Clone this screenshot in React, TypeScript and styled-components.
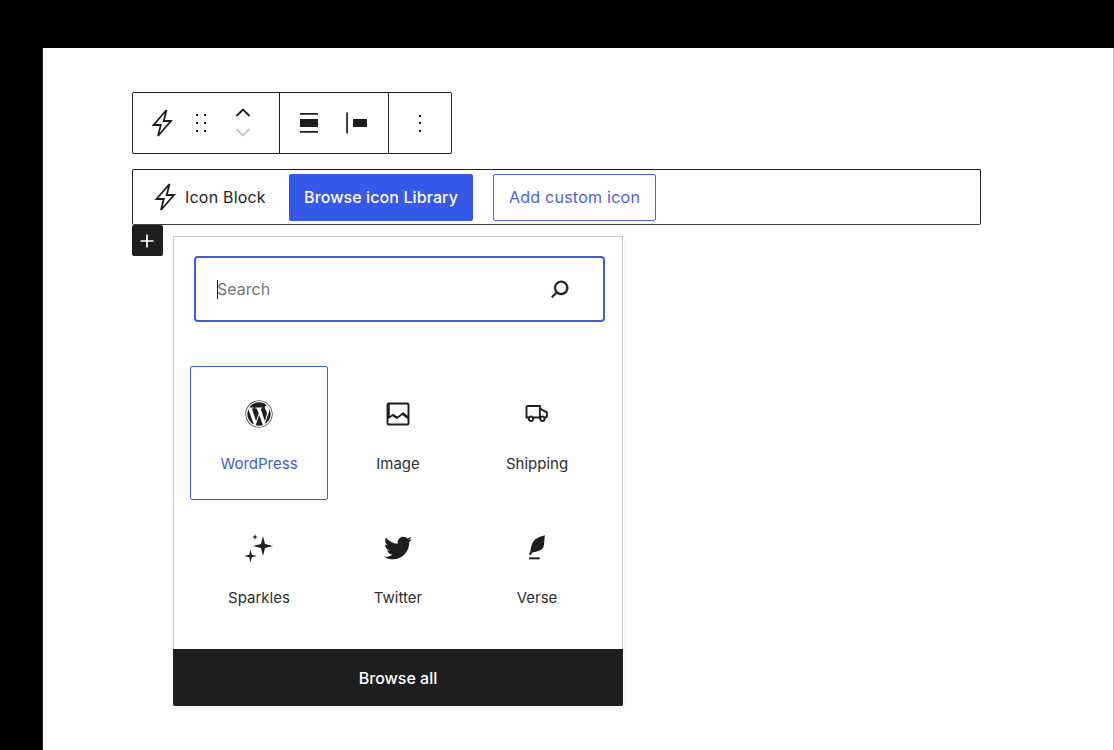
import { createGlobalStyle } from "styled-components";
import styled from "styled-components";
import { FaWordpress, FaTwitter } from "react-icons/fa";

const GlobalStyle = createGlobalStyle`
  html, body {
    margin: 0;
    padding: 0;
    background: #000;
    font-family: Inter, "Liberation Sans", sans-serif;
    color: #1e1e1e;
  }
`;

const Page = styled.div`
  width: 1114px;
  height: 750px;
  padding: 48px 0 0 43px;
  box-sizing: border-box;
  background: #000;
  overflow: hidden;
`;

const Canvas = styled.div`
  height: 702px;
  padding: 44px 0 0 89px;
  box-sizing: border-box;
  background: #fff;
  border-left: 1px solid #2c2c2c;
  border-right: 1px solid #bdbdbd;
  margin-left: -1px;
`;

const BlockToolbar = styled.div`
  display: flex;
  width: 320px;
  height: 62px;
  box-sizing: border-box;
  border: 1px solid #1e1e1e;
  border-radius: 2px;
`;

const ToolbarGroup = styled.div<{ $width: number }>`
  display: flex;
  align-items: center;
  width: ${(p) => p.$width}px;
  flex-shrink: 0;
  box-sizing: border-box;
  & + & {
    border-left: 1px solid #1e1e1e;
  }
`;

const ToolIcon = styled.svg<{ $left: number }>`
  width: 24px;
  height: 24px;
  margin-left: ${(p) => p.$left}px;
  flex-shrink: 0;
  fill: #1e1e1e;
`;

const Mover = styled.div`
  display: flex;
  flex-direction: column;
  align-items: center;
  gap: 11px;
  margin-left: 21px;
  margin-top: -1px;
`;

const MoverIcon = styled.svg<{ $muted?: boolean }>`
  width: 18px;
  height: 9px;
  fill: none;
  stroke: ${(p) => (p.$muted ? "#c4c4c4" : "#1e1e1e")};
  stroke-width: 1.9;
`;

const PlaceholderBar = styled.div`
  display: flex;
  align-items: center;
  width: 849px;
  height: 56px;
  margin-top: 15px;
  box-sizing: border-box;
  border: 1px solid #1e1e1e;
  border-bottom-color: #444;
  border-radius: 2px;
`;

const BoltIcon = styled.svg<{ $left: number }>`
  width: 24px;
  height: 30px;
  margin-left: ${(p) => p.$left}px;
  flex-shrink: 0;
  fill: none;
  stroke: #1e1e1e;
  stroke-width: 1.8;
  stroke-linejoin: miter;
`;

const BlockTitle = styled.span`
  margin-left: 8px;
  font-size: 16px;
  line-height: 20px;
  letter-spacing: 0.2px;
  width: 104px;
  flex-shrink: 0;
`;

const Button = styled.div<{ $primary?: boolean }>`
  display: flex;
  align-items: center;
  justify-content: center;
  height: 47px;
  box-sizing: border-box;
  border-radius: 2px;
  font-size: 16px;
  font-weight: 500;
  letter-spacing: 0.1px;
  ${(p) =>
    p.$primary
      ? "width: 184px; background: #3858e9; color: #fff; margin-right: 20px;"
      : "width: 163px; background: #fff; color: #4a63df; border: 1.5px solid #4a63df; font-weight: 400; letter-spacing: 0.25px;"}
`;

const InserterRow = styled.div`
  display: flex;
  align-items: flex-start;
  gap: 10px;
`;

const AddButton = styled.div`
  display: flex;
  align-items: center;
  justify-content: center;
  width: 31px;
  height: 31px;
  border-radius: 2px;
  background: #1e1e1e;
  flex-shrink: 0;
  svg {
    width: 26px;
    height: 26px;
    margin-left: -1px;
    fill: #fff;
  }
`;

const Popover = styled.div`
  width: 450px;
  height: 470px;
  margin-top: 11px;
  box-sizing: border-box;
  display: flex;
  flex-direction: column;
  border: 1px solid #ccc;
  border-bottom: none;
  box-shadow: 0 2px 6px rgba(0, 0, 0, 0.05);
  background: #fff;
`;

const SearchField = styled.div`
  display: flex;
  align-items: center;
  height: 66px;
  margin: 19px 17px 0 20px;
  padding-left: 21px;
  padding-right: 29px;
  box-sizing: border-box;
  border: 2px solid #3e5de0;
  border-radius: 4px;
  svg {
    width: 28px;
    height: 28px;
    fill: #1e1e1e;
    stroke: #1e1e1e;
    stroke-width: 0.4;
    flex-shrink: 0;
  }
`;

const Caret = styled.span`
  width: 1px;
  height: 19px;
  margin-right: -1px;
  background: #1e1e1e;
  flex-shrink: 0;
`;

const Placeholder = styled.span`
  flex: 1;
  font-size: 16px;
  color: #757575;
`;

const IconGrid = styled.div`
  display: grid;
  grid-template-columns: repeat(3, 139px);
  grid-auto-rows: 134px;
  margin: 44px 0 0 16px;
`;

const IconCell = styled.div<{ $active?: boolean }>`
  display: flex;
  flex-direction: column;
  align-items: center;
  width: 138px;
  padding-top: 33px;
  box-sizing: border-box;
  border: 1px solid ${(p) => (p.$active ? "#3e5de0" : "transparent")};
  border-radius: 2px;
  color: ${(p) => (p.$active ? "#3f5ce0" : "#2f2f2f")};
  svg {
    width: 28px;
    height: 28px;
    fill: #1e1e1e;
    overflow: visible;
  }
`;

const CellLabel = styled.span`
  margin-top: 26px;
  font-size: 15px;
  line-height: 20px;
`;

const BrowseAll = styled.div`
  display: flex;
  align-items: center;
  justify-content: center;
  height: 57px;
  padding-top: 1px;
  box-sizing: border-box;
  margin: auto -1px 0;
  background: #1e1e1e;
  border-radius: 0 0 2px 2px;
  color: #fff;
  font-size: 16px;
  font-weight: 500;
`;

const BOLT = "M16.500 2 3.500 17h7.300L8 28 21 13h-7.300L16.500 2z";

// four pointed star, r = tip distance, i = waist
function star(cx: number, cy: number, r: number, i: number) {
  return `M${cx} ${cy - r}L${cx + i} ${cy - i}L${cx + r} ${cy}L${cx + i} ${cy + i}L${cx} ${cy + r}L${cx - i} ${cy + i}L${cx - r} ${cy}L${cx - i} ${cy - i}Z`;
}

const icons = [
  {
    label: "WordPress",
    active: true,
    icon: <FaWordpress />,
  },
  {
    label: "Image",
    icon: (
      <svg viewBox="1 1 22 22">
        <path d="M19 3H5a2 2 0 0 0-2 2v14a2 2 0 0 0 2 2h14a2 2 0 0 0 2-2V5a2 2 0 0 0-2-2zM5 4.500h14a.5.5 0 0 1 .5.5v8.400l-2.900-2.300-.6-.4-.6.400-3.800 2.900-3-1.900-.5-.3-.5.300-2.100 1.500V5a.5.5 0 0 1 .5-.5zm14 15H5a.5.5 0 0 1-.5-.5v-3.100l3.100-2.200 3 2 .5.300.5-.3 3.800-2.900 4.100 3.200V19a.5.5 0 0 1-.5.5z" />
      </svg>
    ),
  },
  {
    label: "Shipping",
    icon: (
      <svg viewBox="1 1 22 22">
        <path
          fillRule="evenodd"
          d="M3 6.75C3 5.784 3.784 5 4.75 5H15V7.313l.05.027 5.056 2.73.394.212v3.468a1.75 1.75 0 01-1.75 1.75h-.012a2.5 2.5 0 11-4.975 0H9.737a2.5 2.5 0 11-4.975 0H3V6.75zM13.5 14V6.5H4.75a.25.25 0 00-.25.25V14h.965a2.493 2.493 0 011.785-.75c.7 0 1.332.287 1.785.75H13.5zm4.535 0h.715a.25.25 0 00.25-.25v-2.573l-4-2.16v4.568a2.487 2.487 0 011.25-.335c.7 0 1.332.287 1.785.75zM6.282 15.5a1.002 1.002 0 00.968 1.25 1 1 0 10-.968-1.25zm9 0a1 1 0 101.937.498 1 1 0 00-1.938-.498z"
        />
      </svg>
    ),
  },
  {
    label: "Sparkles",
    icon: (
      <svg viewBox="0 0 28 28">
        <path d={star(18, 12, 10, 2)} />
        <path d={star(5.500, 22, 6.500, 1.300)} />
        <path d={star(10, 3, 3, 0.700)} />
      </svg>
    ),
  },
  {
    label: "Twitter",
    icon: <FaTwitter />,
  },
  {
    label: "Verse",
    icon: (
      <svg viewBox="1.500 1 21 21">
        <path d="M17.800 2l-.9.3c-.1 0-3.600 1-5.200 2.100C10 5.500 9.300 6.500 8.900 7.100c-.6.900-1.700 4.700-1.700 6.300l-.9 2.300c-.2.400 0 .8.400 1 .1 0 .2.100.3.100.3 0 .6-.2.700-.5l.6-1.500c.3 0 .7-.1 1.200-.2.700-.1 1.400-.3 2.200-.5.800-.2 1.600-.5 2.400-.8.700-.3 1.400-.7 1.900-1.200s.8-1.200 1-1.900c.2-.7.300-1.600.4-2.400.1-.8.100-1.700.2-2.500 0-.8.100-1.500.2-2.100V2z" />
        <path d="M6 20h8v-1.500H6V20z" />
      </svg>
    ),
  },
];

function App() {
  return (
    <>
      <GlobalStyle />
      <Page>
        <Canvas>
          <BlockToolbar>
            <ToolbarGroup $width={146}>
              <BoltIcon $left={17} viewBox="0 0 24 30">
                <path d={BOLT} />
              </BoltIcon>
              <ToolIcon $left={15} viewBox="0 0 24 24">
                <path d="M7 3h2v2H7zM15 3h2v2h-2zM7 11h2v2H7zM15 11h2v2h-2zM7 19h2v2H7zM15 19h2v2h-2z" />
              </ToolIcon>
              <Mover>
                <MoverIcon viewBox="0 0 18 9">
                  <path d="M2.500 8 9 1.500 15.500 8" />
                </MoverIcon>
                <MoverIcon $muted viewBox="0 0 18 9">
                  <path d="M2.500 1 9 7.500 15.500 1" />
                </MoverIcon>
              </Mover>
            </ToolbarGroup>
            <ToolbarGroup $width={109}>
              <ToolIcon $left={17} viewBox="0 0 24 24">
                <path d="M3 2h18v1.800H3zM3 8h18v8H3zM3 20h18v1.800H3z" />
              </ToolIcon>
              <ToolIcon $left={23} viewBox="0 0 24 24">
                <path d="M2.200 1.500h1.700v21H2.200zM9 8h14v8H9z" />
              </ToolIcon>
            </ToolbarGroup>
            <ToolbarGroup $width={63}>
              <ToolIcon $left={19} viewBox="0 0 24 24">
                <path d="M11 4h2v2h-2zM11 11h2v2h-2zM11 19h2v2h-2z" />
              </ToolIcon>
            </ToolbarGroup>
          </BlockToolbar>

          <PlaceholderBar>
            <BoltIcon $left={20} viewBox="0 0 24 30">
              <path d={BOLT} />
            </BoltIcon>
            <BlockTitle>Icon Block</BlockTitle>
            <Button $primary>Browse icon Library</Button>
            <Button>Add custom icon</Button>
          </PlaceholderBar>

          <InserterRow>
            <AddButton>
              <svg viewBox="0 0 24 24">
                <path d="M18 11.200h-5.200V6h-1.600v5.200H6v1.600h5.200V18h1.600v-5.200H18z" />
              </svg>
            </AddButton>
            <Popover>
              <SearchField>
                <Caret />
                <Placeholder>Search</Placeholder>
                <svg viewBox="0 0 24 24">
                  <path d="M13 5c-3.300 0-6 2.700-6 6 0 1.400.5 2.700 1.300 3.700l-3.800 3.800 1.100 1.100 3.800-3.800c1 .8 2.300 1.300 3.700 1.300 3.300 0 6-2.700 6-6S16.300 5 13 5zm0 10.500c-2.500 0-4.500-2-4.500-4.500s2-4.500 4.500-4.500 4.500 2 4.500 4.500-2 4.500-4.500 4.500z" />
                </svg>
              </SearchField>
              <IconGrid>
                {icons.map((item) => (
                  <IconCell key={item.label} $active={item.active}>
                    {item.icon}
                    <CellLabel>{item.label}</CellLabel>
                  </IconCell>
                ))}
              </IconGrid>
              <BrowseAll>Browse all</BrowseAll>
            </Popover>
          </InserterRow>
        </Canvas>
      </Page>
    </>
  );
}

export default App;
